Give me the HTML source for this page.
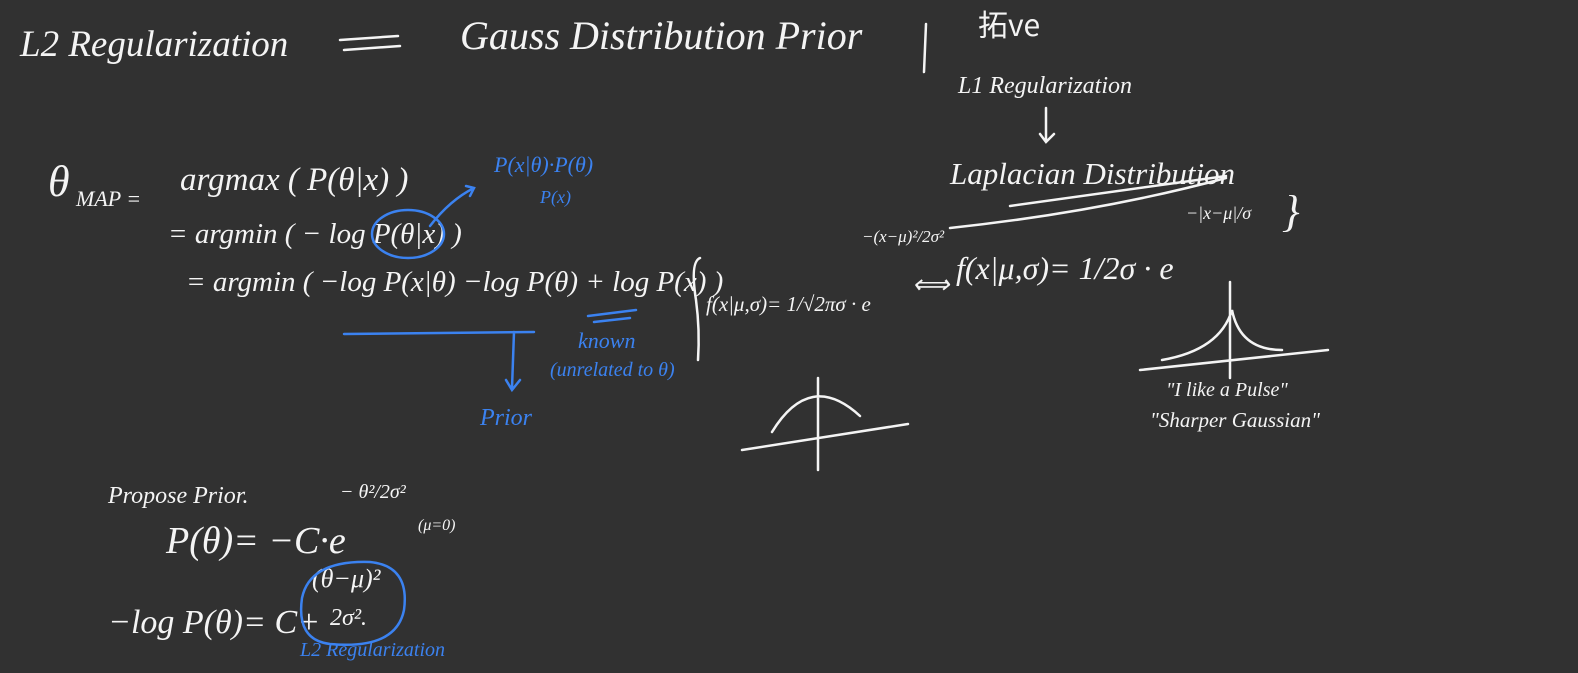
<!DOCTYPE html>
<html><head><meta charset="utf-8"><style>
html,body{margin:0;padding:0;width:1578px;height:673px;overflow:hidden;background:#313131;}
.t{position:absolute;font-family:"Liberation Serif",serif;font-style:italic;color:#f4f4f4;white-space:nowrap;line-height:1;}
.b{color:#3b82f0;}
svg{position:absolute;left:0;top:0;}
</style></head><body>
<div class="t" style="left:20px;top:26px;font-size:37px;">L2 Regularization</div>
<div class="t" style="left:460px;top:16px;font-size:40px;">Gauss Distribution Prior</div>
<div class="t" style="left:978px;top:8px;font-size:30px;font-family:'Noto Sans CJK SC',sans-serif;font-style:normal;">拓ve</div>
<div class="t" style="left:958px;top:74px;font-size:24px;">L1 Regularization</div>
<div class="t" style="left:950px;top:158px;font-size:31px;">Laplacian Distribution</div>
<div class="t" style="left:48px;top:160px;font-size:44px;">θ</div>
<div class="t" style="left:76px;top:188px;font-size:22px;">MAP =</div>
<div class="t" style="left:180px;top:164px;font-size:33px;">argmax ( P(θ|x) )</div>
<div class="t b" style="left:494px;top:154px;font-size:22px;">P(x|θ)·P(θ)</div>
<div class="t b" style="left:540px;top:188px;font-size:18px;">P(x)</div>
<div class="t" style="left:168px;top:220px;font-size:29px;">= argmin ( − log P(θ|x) )</div>
<div class="t" style="left:186px;top:268px;font-size:29px;">= argmin ( −log P(x|θ) −log P(θ) + log P(x) )</div>
<div class="t b" style="left:578px;top:330px;font-size:22px;">known</div>
<div class="t b" style="left:550px;top:360px;font-size:20px;">(unrelated to θ)</div>
<div class="t b" style="left:480px;top:406px;font-size:24px;">Prior</div>
<div class="t" style="left:706px;top:294px;font-size:21px;">f(x|μ,σ)= 1/√2πσ · e</div>
<div class="t" style="left:862px;top:228px;font-size:17px;">−(x−μ)²/2σ²</div>
<div class="t" style="left:912px;top:272px;font-size:26px;">⟺</div>
<div class="t" style="left:956px;top:252px;font-size:32px;">f(x|μ,σ)= 1/2σ · e</div>
<div class="t" style="left:1186px;top:204px;font-size:18px;">−|x−μ|/σ</div>
<div class="t" style="left:1282px;top:190px;font-size:44px;">}</div>
<div class="t" style="left:1166px;top:380px;font-size:20px;">"I like a Pulse"</div>
<div class="t" style="left:1150px;top:410px;font-size:21px;">"Sharper Gaussian"</div>
<div class="t" style="left:108px;top:484px;font-size:24px;">Propose Prior.</div>
<div class="t" style="left:166px;top:522px;font-size:38px;">P(θ)= −C·e</div>
<div class="t" style="left:340px;top:482px;font-size:20px;">− θ²/2σ²</div>
<div class="t" style="left:418px;top:518px;font-size:16px;">(μ=0)</div>
<div class="t" style="left:108px;top:606px;font-size:34px;">−log P(θ)= C+</div>
<div class="t" style="left:312px;top:566px;font-size:26px;">(θ−μ)²</div>
<div class="t" style="left:330px;top:606px;font-size:24px;">2σ².</div>
<div class="t b" style="left:300px;top:640px;font-size:20px;">L2 Regularization</div>
<svg width="1578" height="673" fill="none" stroke="#f4f4f4" stroke-width="2.5" stroke-linecap="round">
<path d="M340 40 L398 36 M344 50 L400 46"/>
<path d="M926 24 L924 72"/>
<path d="M1046 108 L1046 140 M1040 134 L1046 142 L1054 134"/>
<path d="M950 228 Q1100 212 1226 178 M1010 206 L1226 176"/>
<path d="M700 258 Q690 262 696 300 Q700 330 698 360"/>
<path d="M742 450 L908 424 M818 378 L818 470 M772 432 Q810 370 860 416"/>
<path d="M1140 370 L1328 350 M1230 282 L1230 378 M1162 360 Q1220 350 1232 310 Q1240 350 1282 350"/>
<g stroke="#3b82f0">
<path d="M344 334 L534 332 M514 332 L512 388 M506 380 L512 390 L520 380"/>
<path d="M588 316 L636 310 M594 322 L630 318"/>
<path d="M430 226 Q450 200 474 188 M466 186 L474 188 L470 196"/>
<ellipse cx="408" cy="234" rx="36" ry="24"/>
<path d="M302 598 Q310 560 370 562 Q410 566 404 610 Q396 650 330 644 Q296 640 302 598"/>
</g>
</svg>
</body></html>
